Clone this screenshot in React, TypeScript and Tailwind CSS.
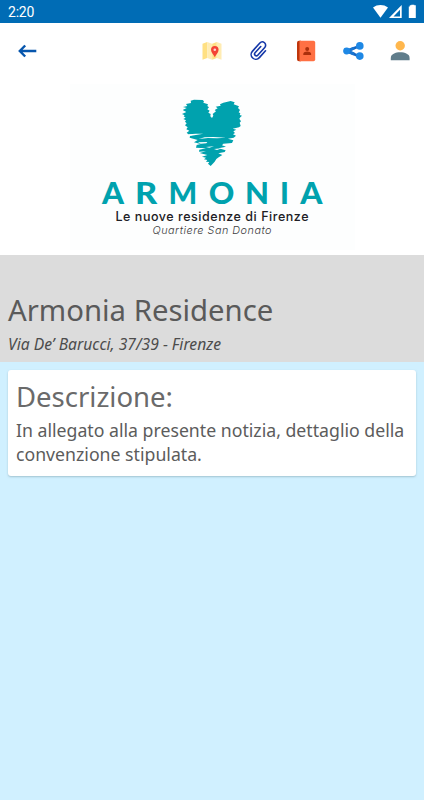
import type { ReactNode } from "react";

function StatusBar() {
  return (
    <div className="flex h-[23px] items-center justify-between bg-[#006cb5] pl-2 text-white">
      <span className="mt-px font-['Roboto',sans-serif] text-[14px] leading-none tracking-[-0.2px]">2:20</span>
      <svg width="51" height="23" viewBox="0 0 51 23" fill="white">
        <path d="M0 7.5C4.4 4.2 10.6 4.2 15 7.5L7.5 17.7Z" />
        <path fillRule="evenodd" d="M28.7 5v13H16ZM27 9.8L20.5 16.4H27Z" />
        <path d="M36.800 5.200h1.500V4.800h3v.4h1.500V18h-7V6.400h1Z" />
      </svg>
    </div>
  );
}

function IconSlot({ label, children }: { label: string; children: ReactNode }) {
  return (
    <button aria-label={label} className="flex h-6 w-[47px] items-center justify-center">
      {children}
    </button>
  );
}

function Toolbar() {
  return (
    <header className="flex h-[55px] items-center justify-between bg-white pr-px pl-[15px]">
      <button aria-label="Indietro">
        <svg width="24" height="24" viewBox="0 0 24 24" fill="none" stroke="#0756ad" strokeWidth="2.4">
          <path d="M21.300 12H5M10.200 6.500L4.800 12l5.400 5.500" />
        </svg>
      </button>
      <nav className="flex">
        {/* Map */}
        <IconSlot label="Mappa">
          <svg width="24" height="24" viewBox="0 0 24 24">
            <path d="M2.500 4.700L7.200 3v16L2.500 20.800Z" fill="#ffe082" />
            <path d="M7.200 3l5 1.700v16.100l-5-1.800Z" fill="#ffecb3" />
            <path d="M12.200 4.700L16.800 3v16l-4.600 1.800Z" fill="#ffe082" />
            <path d="M16.800 3l4.700 1.700v16.100L16.800 19Z" fill="#ffecb3" />
            <path d="M14.800 7a3.800 3.800 0 0 1 3.800 3.800c0 2.700-2.500 4.700-3.800 7.400-1.300-2.700-3.800-4.700-3.800-7.400A3.800 3.800 0 0 1 14.800 7Z" fill="#f44336" />
            <circle cx="14.800" cy="10.800" r="1.300" fill="#fbd5d0" />
          </svg>
        </IconSlot>
        {/* Attachments */}
        <IconSlot label="Allegati">
          <svg width="24" height="24" viewBox="0 0 24 24" fill="none" stroke="#1437a8" strokeWidth="1.6" strokeLinecap="round">
            <path
              transform="rotate(42 12 12)"
              d="M16.700 7.500V16.700a4.700 4.700 0 0 1-9.400 0V5.500a3.300 3.300 0 0 1 6.600 0V16a1.800 1.800 0 0 1-3.600 0V7.500"
            />
          </svg>
        </IconSlot>
        {/* Contacts */}
        <IconSlot label="Contatti">
          <svg width="24" height="24" viewBox="0 0 24 24">
            <path d="M5 1.700h2v20.600H5a2 2 0 0 1-2-2V3.700a2 2 0 0 1 2-2Z" fill="#bf360c" />
            <path d="M5.500 1.700h14a1.700 1.700 0 0 1 1.700 1.700v17.200a1.700 1.700 0 0 1-1.700 1.700h-14Z" fill="#ff7043" />
            <circle cx="13.200" cy="9.900" r="2" fill="#ab300c" />
            <path d="M9.300 16v-1.200c0-1.500 2.400-2.200 3.900-2.200s3.900.7 3.900 2.200V16Z" fill="#ab300c" />
          </svg>
        </IconSlot>
        {/* Share */}
        <IconSlot label="Condividi">
          <svg width="24" height="24" viewBox="0 0 24 24">
            <path d="M18.500 7L6 12l12.500 5.500" fill="none" stroke="#1565c0" strokeWidth="2.6" />
            <path d="M13 9.200L6 12l7 3" fill="none" stroke="#1976d2" strokeWidth="3" />
            <circle cx="5.600" cy="12" r="3.400" fill="#1e88e5" />
            <circle cx="18.800" cy="6.900" r="3.800" fill="#1e88e5" />
            <circle cx="18.800" cy="17.100" r="3.800" fill="#1e88e5" />
          </svg>
        </IconSlot>
        {/* Profile */}
        <IconSlot label="Profilo">
          <svg width="24" height="24" viewBox="0 0 24 24">
            <circle cx="12.200" cy="6.800" r="4.700" fill="#ffb74d" />
            <path d="M2.800 21.200v-2.300c0-7.400 18.800-7.400 18.800 0v2.300Z" fill="#607d8b" />
          </svg>
        </IconSlot>
      </nav>
    </header>
  );
}

function Logo() {
  return (
    <div className="flex h-[177px] justify-center bg-white">
      <svg width="424" height="177" viewBox="0 78 424 177">
        <rect x="70" y="84" width="285" height="166" fill="#fdfefe" />
        {/* Scribbled heart */}
        <g transform="translate(170 90) scale(.33333)">
          <path
            fill="#00a2ae"
            d="M62 32L72 29 98 30 102 34 100 38 114 43 112 48 117 52 112 58 119 62 115 68 122 72 121 79 126 84 130 77 128 72 138 64 134 60 143 55 137 50 152 47 150 43 160 38 182 33 194 37 191 43 207 49 204 54 210 60 206 67 211 70 209 75 216 77 211 82 208 86 213 94 209 98 212 108 207 112 188 116 199 119 190 124 195 129 189 133 198 137 191 143 174 146 190 151 186 159 160 161 156 166 168 170 146 175 167 181 164 186 145 190 157 195 146 202 139 207 134 215 122 228 114 221 118 216 108 215 112 210 102 208 108 203 96 200 112 195 89 189 108 184 87 185 88 179 108 175 78 173 80 165 92 162 72 157 83 150 59 143 60 138 100 131 78 131 55 133 50 128 58 122 49 118 53 112 45 106 50 100 45 95 48 91 40 87 47 83 41 79 44 76 36 72 49 66 38 60 50 54 39 51 52 48 48 42 63 39Z"
          />
          <path
            fill="#fff"
            d="M86 147L104 142 130 141 168 143 141 145 114 144ZM84 157l28-1-3 4-17 1ZM132 177l24-2-15 5ZM108 171l24-2-14 4ZM54 134l27-2-17 4Z"
          />
        </g>
        <g fill="#00a2ae" fontFamily="Lato, sans-serif" fontSize="29.400" fontWeight="900">
          <text x="102" y="204" textLength="22" lengthAdjust="spacingAndGlyphs">A</text>
          <text x="135" y="204" textLength="22.200" lengthAdjust="spacingAndGlyphs">R</text>
          <text x="168.500" y="204" textLength="28.700" lengthAdjust="spacingAndGlyphs">M</text>
          <text x="208.700" y="204" textLength="25.600" lengthAdjust="spacingAndGlyphs">O</text>
          <text x="245" y="204" textLength="24" lengthAdjust="spacingAndGlyphs">N</text>
          <text x="280" y="204">I</text>
          <text x="300.200" y="204" textLength="22.200" lengthAdjust="spacingAndGlyphs">A</text>
        </g>
        <text x="115.500" y="221" fill="#202024" fontFamily="Inter, sans-serif" fontSize="12.500" fontWeight="500" textLength="193">
          Le nuove residenze di Firenze
        </text>
        <text x="152.500" y="234" fill="#3c3c40" fontFamily="Inter, sans-serif" fontSize="10.800" fontStyle="italic" fontWeight="300" textLength="119">
          Quartiere San Donato
        </text>
      </svg>
    </div>
  );
}

export default function App() {
  return (
    <div className="min-h-screen w-full bg-[#d0f0ff] font-['Noto_Sans',sans-serif]">
      <StatusBar />
      <Toolbar />
      <Logo />

      <section className="h-[107px] bg-[#dcdcdc] px-2 pt-[35px] whitespace-nowrap">
        <h1 className="text-[29.3px] leading-10 text-[#5a5a5a]">Armonia Residence</h1>
        <p className="mt-1 text-[15.7px] leading-5 text-[#4c4c4c] italic">Via De’ Barucci, 37/39 - Firenze</p>
      </section>

      <main className="p-2">
        <article className="h-[106px] rounded-[3px] bg-white px-2 pt-2 shadow-[0_1px_2px_#789ba888]">
          <h2 className="text-[27.5px] leading-[38px] text-[#6a6a6a]">Descrizione:</h2>
          <p className="mt-0.5 text-[17.7px] leading-6 whitespace-nowrap text-[#5c5c5c]">
            In allegato alla presente notizia, dettaglio della
            <br />
            convenzione stipulata.
          </p>
        </article>
      </main>
    </div>
  );
}
